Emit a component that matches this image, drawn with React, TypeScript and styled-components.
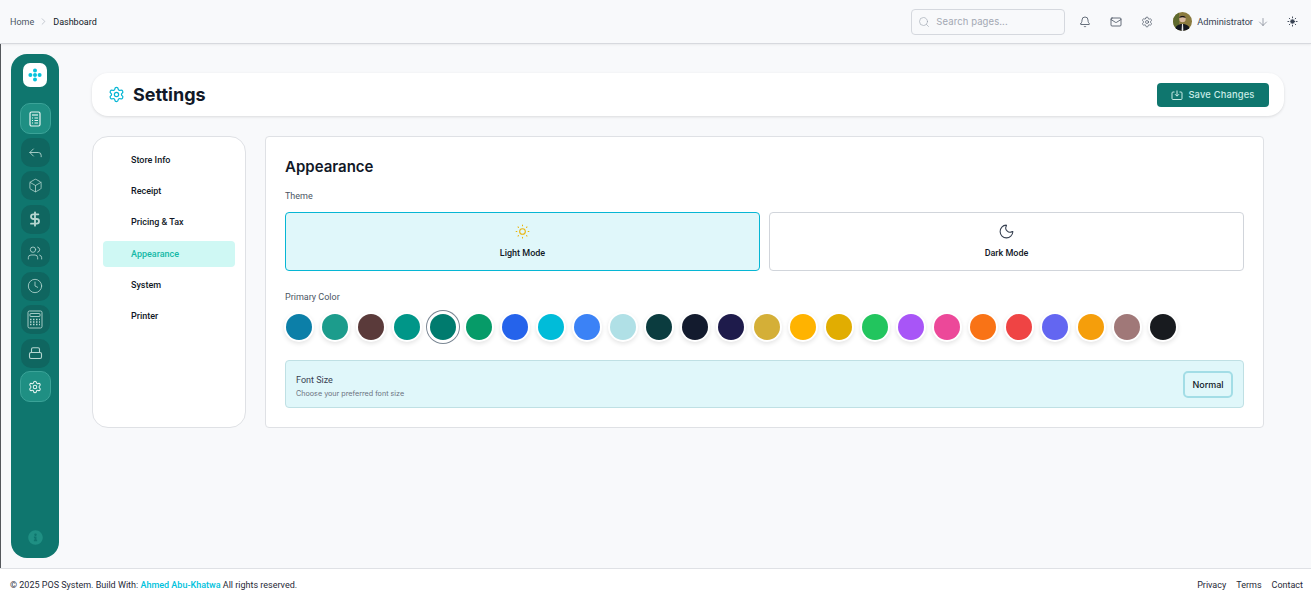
import React from 'react';
import styled, { createGlobalStyle } from 'styled-components';
import {
  Bell,
  Mail,
  Settings as SettingsIcon,
  Search,
  ArrowDown,
  Sun,
  SunMedium,
  Moon,
  ChevronRight,
  Reply,
  Box,
  DollarSign,
  Users,
  Clock,
} from 'lucide-react';
import { FaInfoCircle } from 'react-icons/fa';

const GlobalStyle = createGlobalStyle`
  * { box-sizing: border-box; }
  html, body { margin: 0; height: 100%; }
  body {
    font-family: Roboto, "Liberation Sans", sans-serif;
    background: #f8f9fb;
    color: #111827;
  }
`;

const inter = 'Inter, "Liberation Sans", sans-serif';

const Page = styled.div`
  width: 1311px;
  height: 600px;
  display: flex;
  flex-direction: column;
  overflow: hidden;
`;

const Header = styled.header`
  height: 44px;
  flex: none;
  display: flex;
  align-items: center;
  justify-content: space-between;
  padding: 0 13px 0 10px;
  border-bottom: 1px solid #d7d9de;
  box-shadow: 0 1px 2px rgba(0, 0, 0, 0.06);
`;

const Crumbs = styled.nav`
  display: flex;
  align-items: center;
  gap: 4px;
  font-size: 9px;
  color: #4b5563;
  strong {
    font-weight: 400;
    color: #111827;
  }
  svg {
    color: #9ca3af;
  }
`;

const HeaderRight = styled.div`
  display: flex;
  align-items: center;
`;

const SearchBox = styled.div`
  width: 154px;
  height: 26px;
  display: flex;
  align-items: center;
  gap: 6px;
  padding: 0 6px;
  border: 1px solid #d5d8de;
  border-radius: 4px;
  margin-right: 14px;
  font-family: ${inter};
  font-size: 9.5px;
  letter-spacing: 0.1px;
  color: #a3a8b3;
  svg {
    color: #9ca3af;
  }
`;

const HeaderIcon = styled.span`
  display: flex;
  color: #374151;
  margin-right: 19px;
`;

const User = styled.div`
  display: flex;
  align-items: center;
  font-size: 9.2px;
  color: #374151;
  margin-right: 18px;
  margin-left: 1px;
  svg:last-child {
    margin-left: 4px;
    color: #6b7280;
  }
`;

const Avatar = styled.svg`
  width: 19px;
  height: 19px;
  margin-right: 5px;
  border-radius: 50%;
`;

const Body = styled.div`
  flex: 1;
  display: flex;
  min-height: 0;
  border-left: 1px solid #55585c;
`;

const Sidebar = styled.aside`
  width: 48px;
  height: 504px;
  flex: none;
  margin: 10px 0 0 10px;
  padding: 9px 0 13px;
  background: #0f766e;
  border-radius: 16px;
  display: flex;
  flex-direction: column;
  align-items: center;
`;

const LogoBox = styled.div`
  width: 24px;
  height: 24px;
  background: #fff;
  border-radius: 7px;
  display: flex;
  align-items: center;
  justify-content: center;
  margin-bottom: 17px;
`;

const SideButtons = styled.div`
  display: flex;
  flex-direction: column;
  align-items: center;
  gap: 4.5px;
`;

const SideButton = styled.div<{ $active?: boolean }>`
  width: ${(p) => (p.$active ? 31 : 29)}px;
  height: ${(p) => (p.$active ? 31 : 29)}px;
  margin: ${(p) => (p.$active ? '-1px 0' : '0')};
  display: flex;
  align-items: center;
  justify-content: center;
  border-radius: 10px;
  color: ${(p) => (p.$active ? '#e6f4f1' : '#b5d6d0')};
  background: ${(p) => (p.$active ? '#1f8f83' : '#0f6660')};
  border: ${(p) => (p.$active ? '1px solid #3ba398' : 'none')};
`;

const InfoMark = styled.div`
  margin-top: auto;
  display: flex;
  color: #1f8f83;
`;

const Main = styled.main`
  flex: 1;
  min-width: 0;
  padding: 29px 27px 0 33px;
`;

const TitleCard = styled.div`
  height: 43px;
  display: flex;
  align-items: center;
  justify-content: space-between;
  padding: 0 15px 0 16px;
  background: #fff;
  border-radius: 16px;
  box-shadow: 0 1px 3px rgba(0, 0, 0, 0.12);
  margin-bottom: 20px;
`;

const TitleGroup = styled.div`
  display: flex;
  align-items: center;
  gap: 8px;
  color: #06b6d4;
`;

const PageTitle = styled.h1`
  margin: 0;
  font-family: ${inter};
  font-size: 18px;
  font-weight: 700;
  color: #111827;
`;

const SaveButton = styled.button`
  width: 112px;
  height: 24px;
  display: flex;
  align-items: center;
  justify-content: center;
  gap: 5px;
  border: none;
  border-radius: 4px;
  background: #0f766e;
  color: #c9ece6;
  font-family: ${inter};
  font-size: 9.3px;
  font-weight: 500;
  letter-spacing: 0.2px;
`;

const Columns = styled.div`
  display: flex;
  align-items: stretch;
  height: 292px;
  gap: 19px;
  padding-right: 20px;
`;

const TabsCard = styled.div`
  width: 154px;
  flex: none;
  background: #fff;
  border: 1px solid #dfe1e5;
  border-radius: 16px;
  padding: 10px;
  display: flex;
  flex-direction: column;
  gap: 5.2px;
`;

const Tab = styled.div<{ $active?: boolean }>`
  height: 26px;
  display: flex;
  align-items: center;
  padding-left: 28px;
  font-size: 9px;
  font-weight: 500;
  border-radius: 4px;
  color: ${(p) => (p.$active ? '#14b8a6' : '#111827')};
  background: ${(p) => (p.$active ? '#cff8f4' : 'transparent')};
`;

const Panel = styled.section`
  flex: 1;
  min-width: 0;
  background: #fff;
  border: 1px solid #dfe1e5;
  border-radius: 4px;
  padding: 20px 19px;
`;

const PanelTitle = styled.h2`
  margin: 0 0 13px;
  font-family: ${inter};
  font-size: 15px;
  line-height: 20px;
  font-weight: 600;
  color: #111827;
`;

const Label = styled.div`
  font-size: 9px;
  line-height: 12px;
  color: #4b5563;
`;

const ThemeRow = styled.div`
  display: grid;
  grid-template-columns: 1fr 1fr;
  gap: 9px;
  margin: 10px 0 20px;
`;

const ThemeCard = styled.div<{ $active?: boolean }>`
  height: 59px;
  display: flex;
  flex-direction: column;
  align-items: center;
  padding-top: 10px;
  gap: 8px;
  font-size: 9px;
  font-weight: 500;
  color: #111827;
  border-radius: 4px;
  border: 1px solid ${(p) => (p.$active ? '#06b6d4' : '#d1d5db')};
  background: ${(p) => (p.$active ? '#e0f7fa' : '#fff')};
`;

const Swatches = styled.div`
  display: flex;
  gap: 10px;
  margin: 11px 0 20px 1px;
`;

const Swatch = styled.div<{ $color: string; $selected?: boolean }>`
  width: 26px;
  height: 26px;
  flex: none;
  border-radius: 50%;
  background: ${(p) => p.$color};
  box-shadow: ${(p) =>
    p.$selected
      ? '0 0 0 3px #fff, 0 0 0 4px #7b8794'
      : '0 0 0 2px #fff, 0 2px 4px 2px rgba(0, 0, 0, 0.1)'};
`;

const FontRow = styled.div`
  height: 48px;
  display: flex;
  align-items: center;
  justify-content: space-between;
  padding: 0 10px;
  background: #e0f7fa;
  border: 1px solid #bfe0e4;
  border-radius: 4px;
`;

const FontText = styled.div`
  margin-top: 4px;
`;

const FontName = styled.div`
  font-size: 9px;
  line-height: 12px;
  color: #374151;
`;

const FontHint = styled.div`
  font-family: ${inter};
  font-size: 7.2px;
  line-height: 10px;
  margin-top: 3px;
  color: #6b7280;
`;

const FontButton = styled.div`
  width: 50px;
  height: 27px;
  display: flex;
  align-items: center;
  justify-content: center;
  font-family: ${inter};
  font-size: 9px;
  font-weight: 500;
  color: #111827;
  border: 2px solid #a3dde6;
  border-radius: 5px;
`;

const Footer = styled.footer`
  height: 32px;
  flex: none;
  display: flex;
  align-items: center;
  justify-content: space-between;
  padding: 0 8px 0 10px;
  background: #fff;
  border-top: 1px solid #dfe1e5;
  font-size: 9px;
  color: #1f2937;
`;

const Credit = styled.span`
  color: #00c2dc;
  font-weight: 500;
`;

const FooterLinks = styled.div`
  display: flex;
  gap: 10px;
`;

const colors = [
  '#0c7fa8', '#1c9c8c', '#5a3a3a', '#009688', '#007b6e', '#069b68', '#2563eb',
  '#00bcd9', '#3b82f6', '#b0e0e6', '#0b3c3f', '#131b2e', '#1e1b4b', '#d4af37',
  '#ffb300', '#e1ad01', '#22c55e', '#a855f7', '#ec4899', '#f97316', '#ef4444',
  '#6366f1', '#f59e0b', '#a07878', '#181b1f',
];

const tabs = ['Store Info', 'Receipt', 'Pricing & Tax', 'Appearance', 'System', 'Printer'];

const Logo = () => (
  <svg width="14" height="14" viewBox="0 0 14 14" fill="#06c3dd">
    <circle cx="7" cy="2.6" r="2" />
    <circle cx="7" cy="7" r="2" />
    <circle cx="7" cy="11.4" r="2" />
    <circle cx="2.4" cy="7" r="2" />
    <circle cx="11.6" cy="7" r="2" />
  </svg>
);

const Sheet = () => (
  <svg width="14" height="16" viewBox="0 0 14 16" fill="none" stroke="currentColor" strokeWidth="1.2">
    <rect x="2" y="1" width="10" height="14" rx="1.500" />
    <path d="M4 4h6" />
    <path d="M4 7h1M6.500 7h3.500M4 9.500h1M6.500 9.500h3.500M4 12h1M6.500 12h3.500" strokeWidth="1" />
  </svg>
);

const Till = () => (
  <svg width="16" height="19" viewBox="0 0 16 19" fill="none" stroke="currentColor" strokeWidth="0.9">
    <rect x="1" y="1" width="14" height="17" rx="1.500" />
    <rect x="3" y="3.500" width="10" height="3" rx="0.500" />
    <g strokeDasharray="1.500 1.500" strokeWidth="1.300">
      <path d="M3 9.500h10M3 12h10M3 14.500h10" />
    </g>
  </svg>
);

const Drawer = () => (
  <svg width="15" height="14" viewBox="0 0 15 14" fill="none" stroke="currentColor" strokeWidth="1.1" strokeLinejoin="round">
    <rect x="1.500" y="6.500" width="12" height="6" rx="1.500" />
    <path d="M3.500 6.500V3.200a1.500 1.500 0 0 1 1.500-1.500h5a1.500 1.500 0 0 1 1.500 1.500v3.300" />
  </svg>
);

const App: React.FC = () => {
  return (
    <Page>
      <GlobalStyle />
      <Header>
        <Crumbs>
          <span>Home</span>
          <ChevronRight size={11} strokeWidth={1.25} />
          <strong>Dashboard</strong>
        </Crumbs>
        <HeaderRight>
          <SearchBox>
            <Search size={12} strokeWidth={1.25} />
            Search pages...
          </SearchBox>
          <HeaderIcon><Bell size={12} strokeWidth={1.5} /></HeaderIcon>
          <HeaderIcon><Mail size={12} strokeWidth={1.5} /></HeaderIcon>
          <HeaderIcon><SettingsIcon size={12} strokeWidth={1.25} /></HeaderIcon>
          <User>
            <Avatar viewBox="0 0 19 19">
              <rect width="19" height="19" fill="#8a7a3e" />
              <rect x="0" y="0" width="6" height="19" fill="#5f6a2e" />
              <path d="M2 19c0-5 3-7 7.500-7s7.500 2 7.500 7z" fill="#14181f" />
              <circle cx="9.500" cy="7" r="3.200" fill="#d9b9a0" />
              <path d="M6.300 6c0-3 6.400-3 6.400 0-2-1-4.400-1-6.400 0z" fill="#1a1512" />
              <path d="M9 12h1l.4 7h-1.800z" fill="#e8e8e8" />
            </Avatar>
            Administrator
            <ArrowDown size={12} strokeWidth={1.25} />
          </User>
          <Sun size={11} strokeWidth={2} color="#374151" fill="#374151" />
        </HeaderRight>
      </Header>
      <Body>
        <Sidebar>
          <LogoBox><Logo /></LogoBox>
          <SideButtons>
            <SideButton $active><Sheet /></SideButton>
            <SideButton><Reply size={17} strokeWidth={1.25} /></SideButton>
            <SideButton><Box size={15} strokeWidth={1.25} /></SideButton>
            <SideButton><DollarSign size={16} strokeWidth={2.75} /></SideButton>
            <SideButton><Users size={16} strokeWidth={1.25} /></SideButton>
            <SideButton><Clock size={16} strokeWidth={1.25} /></SideButton>
            <SideButton><Till /></SideButton>
            <SideButton><Drawer /></SideButton>
            <SideButton $active><SettingsIcon size={14} strokeWidth={1.75} /></SideButton>
          </SideButtons>
          <InfoMark><FaInfoCircle size={15} /></InfoMark>
        </Sidebar>
        <Main>
          <TitleCard>
            <TitleGroup>
              <SettingsIcon size={17} strokeWidth={1.75} />
              <PageTitle>Settings</PageTitle>
            </TitleGroup>
            <SaveButton>
              <svg width="12" height="12" viewBox="0 0 12 12" fill="none" stroke="currentColor" strokeWidth="1">
                <path d="M3.500 3H2a1 1 0 0 0-1 1v5.500a1 1 0 0 0 1 1h8a1 1 0 0 0 1-1V4a1 1 0 0 0-1-1H8.500" />
                <path d="M6 1.500V7M4 5.200 6 7.200 8 5.200" />
              </svg>
              Save Changes
            </SaveButton>
          </TitleCard>
          <Columns>
            <TabsCard>
              {tabs.map((t) => (
                <Tab key={t} $active={t === 'Appearance'}>{t}</Tab>
              ))}
            </TabsCard>
            <Panel>
              <PanelTitle>Appearance</PanelTitle>
              <Label>Theme</Label>
              <ThemeRow>
                <ThemeCard $active>
                  <SunMedium size={17} strokeWidth={1.5} color="#eab308" />
                  Light Mode
                </ThemeCard>
                <ThemeCard>
                  <Moon size={17} strokeWidth={1.5} color="#374151" />
                  Dark Mode
                </ThemeCard>
              </ThemeRow>
              <Label>Primary Color</Label>
              <Swatches>
                {colors.map((c, i) => (
                  <Swatch key={c + i} $color={c} $selected={i === 4} />
                ))}
              </Swatches>
              <FontRow>
                <FontText>
                  <FontName>Font Size</FontName>
                  <FontHint>Choose your preferred font size</FontHint>
                </FontText>
                <FontButton>Normal</FontButton>
              </FontRow>
            </Panel>
          </Columns>
        </Main>
      </Body>
      <Footer>
        <span>© 2025 POS System. Build With: <Credit>Ahmed Abu-Khatwa</Credit> All rights reserved.</span>
        <FooterLinks>
          <span>Privacy</span>
          <span>Terms</span>
          <span>Contact</span>
        </FooterLinks>
      </Footer>
    </Page>
  );
};

export default App;
